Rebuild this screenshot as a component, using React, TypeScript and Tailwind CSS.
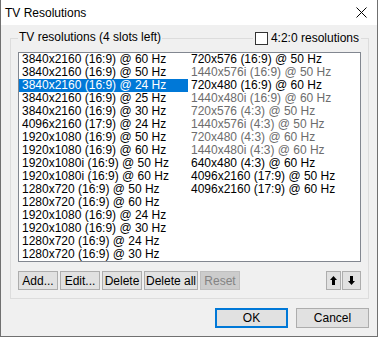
import { ReactNode } from "react";

const leftItems = [
  "3840x2160 (16:9) @ 60 Hz",
  "3840x2160 (16:9) @ 50 Hz",
  "3840x2160 (16:9) @ 24 Hz",
  "3840x2160 (16:9) @ 25 Hz",
  "3840x2160 (16:9) @ 30 Hz",
  "4096x2160 (17:9) @ 24 Hz",
  "1920x1080 (16:9) @ 50 Hz",
  "1920x1080 (16:9) @ 60 Hz",
  "1920x1080i (16:9) @ 50 Hz",
  "1920x1080i (16:9) @ 60 Hz",
  "1280x720 (16:9) @ 50 Hz",
  "1280x720 (16:9) @ 60 Hz",
  "1920x1080 (16:9) @ 24 Hz",
  "1920x1080 (16:9) @ 30 Hz",
  "1280x720 (16:9) @ 24 Hz",
  "1280x720 (16:9) @ 30 Hz",
];

const rightItems = [
  { label: "720x576 (16:9) @ 50 Hz", enabled: true },
  { label: "1440x576i (16:9) @ 50 Hz", enabled: false },
  { label: "720x480 (16:9) @ 60 Hz", enabled: true },
  { label: "1440x480i (16:9) @ 60 Hz", enabled: false },
  { label: "720x576 (4:3) @ 50 Hz", enabled: false },
  { label: "1440x576i (4:3) @ 50 Hz", enabled: false },
  { label: "720x480 (4:3) @ 60 Hz", enabled: false },
  { label: "1440x480i (4:3) @ 60 Hz", enabled: false },
  { label: "640x480 (4:3) @ 60 Hz", enabled: true },
  { label: "4096x2160 (17:9) @ 50 Hz", enabled: true },
  { label: "4096x2160 (17:9) @ 60 Hz", enabled: true },
];

type BtnProps = {
  children: ReactNode;
  className?: string;
  disabled?: boolean;
};

function Btn({ children, className = "", disabled }: BtnProps) {
  return (
    <div
      className={
        "flex items-center justify-center h-[19px] border whitespace-nowrap " +
        (disabled
          ? "bg-[#cccccc] border-[#bfbfbf] text-[#838383] "
          : "bg-[#e1e1e1] border-[#adadad] text-black ") +
        className
      }
    >
      {children}
    </div>
  );
}

export default function App() {
  return (
    <div className="w-[378px] h-[337px] bg-[#f0f0f0] border-x border-b border-[#707070] flex flex-col font-['Liberation_Sans',Arial,sans-serif] text-[12px] text-black overflow-hidden">
      <div className="h-[25px] bg-white flex items-center justify-between pl-[4px] pr-[10px] shrink-0">
        <span className="text-[12px]">TV Resolutions</span>
        <svg width="11" height="11" viewBox="0 0 11 11">
          <path d="M0.5 0.5 L10.5 10.5 M10.5 0.5 L0.5 10.5" stroke="#000" strokeWidth="1" />
        </svg>
      </div>

      <div className="pl-[9px] pr-[8px] flex flex-col">
        <div className="relative mt-[13px] border border-[#dcdcdc] px-[7px] pt-[13px] pb-[8px] flex flex-col">
          <div className="absolute left-[7px] -top-[9px] h-[15px] px-[1px] bg-[#f0f0f0] leading-[15px]">
            TV resolutions (4 slots left)
          </div>
          <div className="absolute right-[7px] -top-[8px] h-[15px] pl-[2px] pr-[2px] bg-[#f0f0f0] flex items-center gap-[3px] leading-[15px]">
            <div className="w-[13px] h-[13px] border border-[#333333] bg-white" />
            <span>4:2:0 resolutions</span>
          </div>

          <div className="h-[210px] border border-[#828790] bg-white flex leading-[13px] whitespace-nowrap">
            <div className="w-[169px] flex flex-col">
              {leftItems.map((item, i) => (
                <div
                  key={i}
                  className={
                    "h-[13px] pl-[3px] " +
                    (i === 2 ? "bg-[#0078d7] text-white" : "text-black")
                  }
                >
                  {item}
                </div>
              ))}
            </div>
            <div className="flex flex-col">
              {rightItems.map((item, i) => (
                <div
                  key={i}
                  className={
                    "h-[13px] pl-[3px] " +
                    (item.enabled ? "text-black" : "text-[#6d6d6d]")
                  }
                >
                  {item.label}
                </div>
              ))}
            </div>
          </div>

          <div className="mt-[9px] flex items-center">
            <div className="flex gap-[2px]">
              <Btn className="w-[40px]">Add...</Btn>
              <Btn className="w-[40px]">Edit...</Btn>
              <Btn className="w-[40px]">Delete</Btn>
              <Btn className="w-[54px]">Delete all</Btn>
              <Btn className="w-[40px]" disabled>
                Reset
              </Btn>
            </div>
            <div className="ml-auto flex gap-[1px]">
              <Btn className="w-[15px]">
                <svg width="7" height="9" viewBox="0 0 7 9">
                  <path d="M3.5 0 L7 4 L5 4 L5 9 L2 9 L2 4 L0 4 Z" fill="#000" />
                </svg>
              </Btn>
              <Btn className="w-[19px]">
                <svg width="7" height="9" viewBox="0 0 7 9">
                  <path d="M3.5 9 L7 5 L5 5 L5 0 L2 0 L2 5 L0 5 Z" fill="#000" />
                </svg>
              </Btn>
            </div>
          </div>
        </div>

        <div className="mt-[9px] flex justify-end gap-[8px]">
          <div className="w-[73px] h-[20px] border-2 border-[#0078d7] bg-[#e1e1e1] flex items-center justify-center">
            OK
          </div>
          <div className="w-[73px] h-[20px] border border-[#adadad] bg-[#e1e1e1] flex items-center justify-center">
            Cancel
          </div>
        </div>
      </div>
    </div>
  );
}
